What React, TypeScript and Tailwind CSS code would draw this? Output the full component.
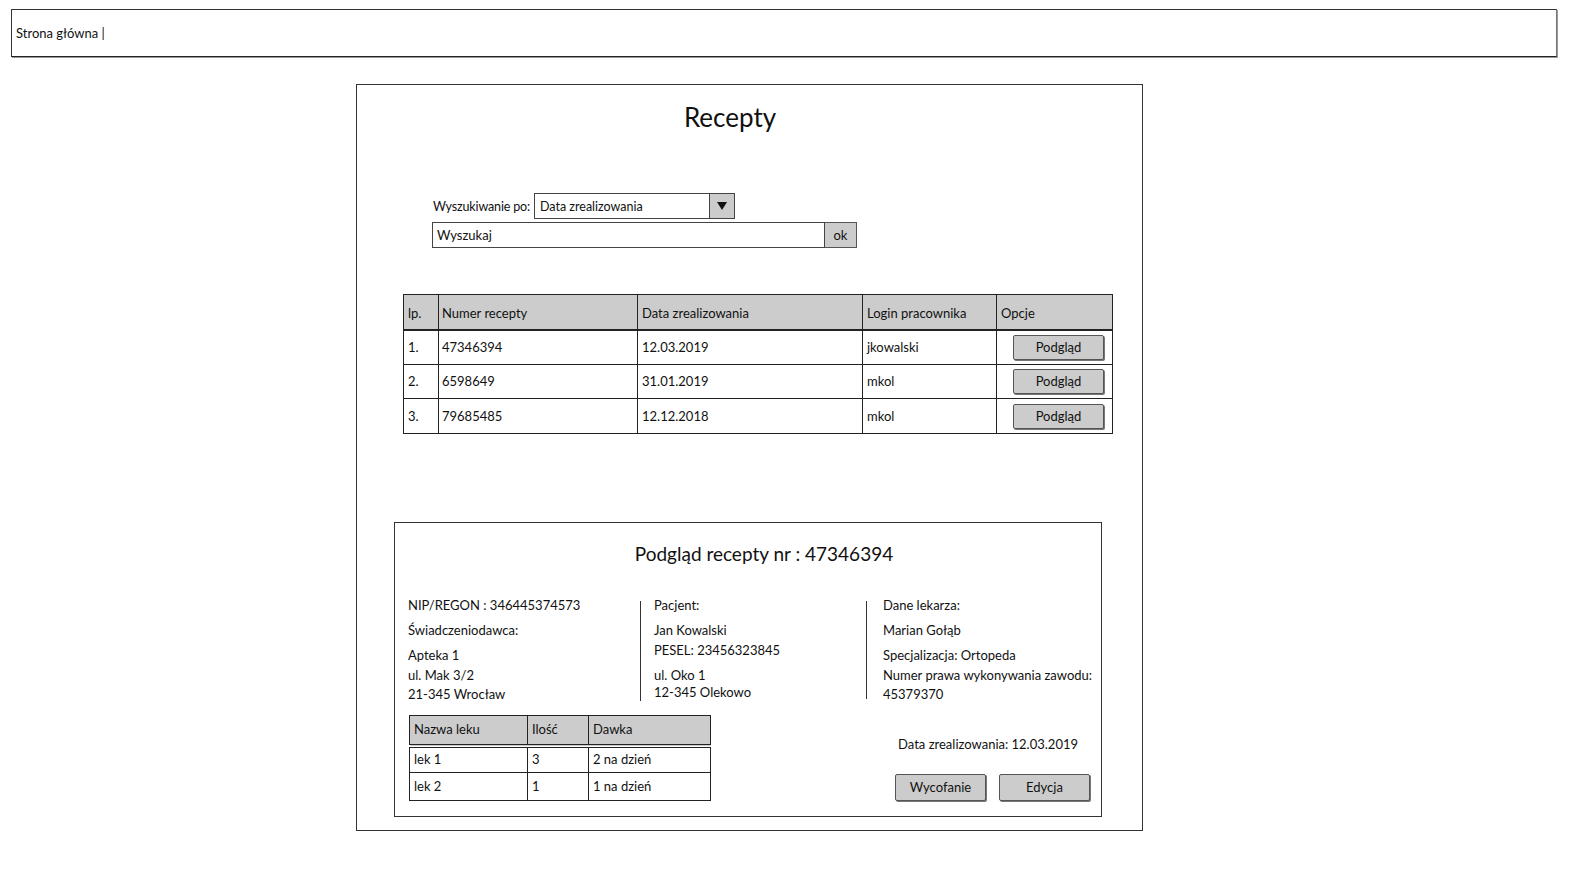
import React from "react";

const rows = [
  { lp: "1.", nr: "47346394", data: "12.03.2019", login: "jkowalski", h: "h-[35px]" },
  { lp: "2.", nr: "6598649", data: "31.01.2019", login: "mkol", h: "h-[34px]" },
  { lp: "3.", nr: "79685485", data: "12.12.2018", login: "mkol", h: "h-[35px]" },
];

function Btn({ children, className = "" }: { children: React.ReactNode; className?: string }) {
  return (
    <div
      className={
        "bg-[#cccccc] border border-[#555] rounded-[2px] flex items-center justify-center shadow-[1px_1px_0_#777] " +
        className
      }
    >
      {children}
    </div>
  );
}

export default function App() {
  return (
    <div className="w-[1572px] h-[875px] bg-white overflow-hidden text-[13px] leading-[17px] text-[#111] font-['Lato',sans-serif] pt-[9px]">
      {/* top bar */}
      <div className="ml-[11px] w-[1546px] h-[48px] border border-[#333] border-r-[#777] border-b-[#222] flex items-center pl-[4px] shadow-[1px_1px_0_#999]">
        Strona główna |
      </div>

      {/* main panel */}
      <div className="ml-[356px] mt-[27px] w-[787px] h-[747px] border border-[#333] flex flex-col">
        <h1 className="text-center text-[26px] leading-[34px] mt-[15px] pr-[39px]">Recepty</h1>

        {/* search by */}
        <div className="ml-[76px] mt-[59px] flex items-center h-[26px]">
          <span className="w-[101px] text-[12.5px] tracking-[-0.15px]">Wyszukiwanie po:</span>
          <div className="w-[201px] h-[26px] border border-[#444] flex">
            <span className="flex-1 pl-[5px] flex items-center text-[12.5px]">Data zrealizowania</span>
            <div className="w-[25px] bg-[#cccccc] border-l border-[#444] flex items-center justify-center">
              <svg width="10" height="8" viewBox="0 0 10 8">
                <path d="M0 0 L10 0 L5 8 Z" fill="#111" />
              </svg>
            </div>
          </div>
        </div>
        <div className="ml-[75px] mt-[3px] flex h-[26px]">
          <div className="w-[393px] h-[26px] border border-[#444] flex items-center pl-[4px]">Wyszukaj</div>
          <div className="w-[32px] h-[26px] bg-[#cccccc] border border-l-0 border-[#555] flex items-center justify-center">
            ok
          </div>
        </div>

        {/* results table */}
        <table className="ml-[46px] mt-[46px] w-[709px] border-collapse table-fixed border border-[#222]">
          <colgroup>
            <col className="w-[35px]" />
            <col className="w-[199px]" />
            <col className="w-[225px]" />
            <col className="w-[134px]" />
            <col className="w-[116px]" />
          </colgroup>
          <thead>
            <tr className="h-[35px] bg-[#cccccc] border-b-2 border-[#222] text-left">
              <th className="font-normal border border-[#222] pl-[4px] pt-[3px]">lp.</th>
              <th className="font-normal border border-[#222] pl-[3px] pt-[3px]">Numer recepty</th>
              <th className="font-normal border border-[#222] pl-[4px] pt-[3px]">Data zrealizowania</th>
              <th className="font-normal border border-[#222] pl-[4px] pt-[3px]">Login pracownika</th>
              <th className="font-normal border border-[#222] pl-[4px] pt-[3px]">Opcje</th>
            </tr>
          </thead>
          <tbody>
            {rows.map((r) => (
              <tr key={r.lp} className={r.h}>
                <td className="border border-[#222] pl-[4px]">{r.lp}</td>
                <td className="border border-[#222] pl-[3px]">{r.nr}</td>
                <td className="border border-[#222] pl-[4px]">{r.data}</td>
                <td className="border border-[#222] pl-[4px]">{r.login}</td>
                <td className="border border-[#222]">
                  <div className="flex justify-end pr-[8px]">
                    <Btn className="w-[91px] h-[25px]">Podgląd</Btn>
                  </div>
                </td>
              </tr>
            ))}
          </tbody>
        </table>

        {/* preview */}
        <div className="ml-[37px] mt-[88px] w-[708px] h-[295px] border border-[#333] flex flex-col">
          <div className="text-center text-[19px] leading-[24px] mt-[19px] pl-[32px]">Podgląd recepty nr : 47346394</div>

          <div className="flex items-start mt-[31px] pl-[13px]">
            <div className="w-[232px] flex flex-col">
              <div>NIP/REGON : 346445374573</div>
              <div className="mt-[8px]">Świadczeniodawca:</div>
              <div className="mt-[8px]">Apteka 1</div>
              <div className="mt-[3px]">ul. Mak 3/2</div>
              <div className="mt-[2px]">21-345 Wrocław</div>
            </div>
            <div className="w-px h-[100px] mt-[4px] bg-[#333]" />
            <div className="w-[225px] pl-[13px] flex flex-col">
              <div>Pacjent:</div>
              <div className="mt-[8px]">Jan Kowalski</div>
              <div className="mt-[3px]">PESEL: 23456323845</div>
              <div className="mt-[8px]">ul. Oko 1</div>
              <div>12-345 Olekowo</div>
            </div>
            <div className="w-px h-[98px] mt-[4px] bg-[#333]" />
            <div className="pl-[16px] flex flex-col">
              <div>Dane lekarza:</div>
              <div className="mt-[8px]">Marian Gołąb</div>
              <div className="mt-[8px]">Specjalizacja: Ortopeda</div>
              <div className="mt-[3px]">Numer prawa wykonywania zawodu:</div>
              <div className="mt-[2px]">45379370</div>
            </div>
          </div>

          <div className="flex items-start mt-[12px] pl-[14px]">
            <table className="w-[301px] border-collapse table-fixed border border-[#222]">
              <colgroup>
                <col className="w-[118px]" />
                <col className="w-[61px]" />
                <col className="w-[122px]" />
              </colgroup>
              <thead>
                <tr className="h-[30px] bg-[#cccccc] text-left border-b-4 border-double border-[#222]">
                  <th className="font-normal border-x border-[#222] pl-[4px]">Nazwa leku</th>
                  <th className="font-normal border-x border-[#222] pl-[4px]">Ilość</th>
                  <th className="font-normal border-x border-[#222] pl-[4px]">Dawka</th>
                </tr>
              </thead>
              <tbody>
                <tr className="h-[27px]">
                  <td className="border border-[#222] pl-[4px]">lek 1</td>
                  <td className="border border-[#222] pl-[4px]">3</td>
                  <td className="border border-[#222] pl-[4px]">2 na dzień</td>
                </tr>
                <tr className="h-[28px]">
                  <td className="border border-[#222] pl-[4px]">lek 2</td>
                  <td className="border border-[#222] pl-[4px]">1</td>
                  <td className="border border-[#222] pl-[4px]">1 na dzień</td>
                </tr>
              </tbody>
            </table>
            <div className="flex-1 flex flex-col items-end pr-[11px]">
              <div className="mt-[21px] mr-[12px]">Data zrealizowania: 12.03.2019</div>
              <div className="mt-[21px] flex gap-[13px]">
                <Btn className="w-[91px] h-[27px]">Wycofanie</Btn>
                <Btn className="w-[91px] h-[27px]">Edycja</Btn>
              </div>
            </div>
          </div>
        </div>
      </div>
    </div>
  );
}
